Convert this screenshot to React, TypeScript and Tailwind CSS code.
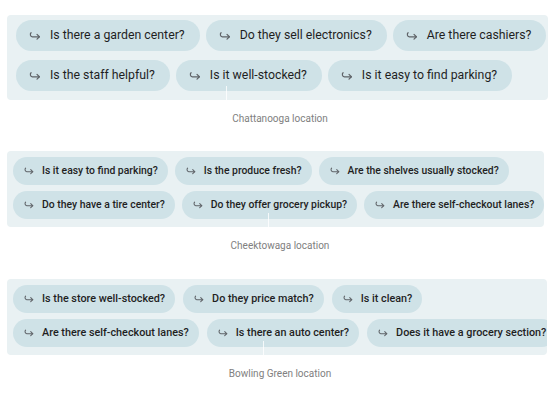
import type { ReactNode } from 'react';

type Section = {
  location: string;
  rows: string[][];
  big?: boolean;
  text: string;
  width: string;
  seam: string;
};

const sections: Section[] = [
  {
    location: 'Chattanooga location',
    big: true,
    text: 'text-[12.3px]',
    width: 'w-[541px]',
    seam: 'left-[219px]',
    rows: [
      ['Is there a garden center?', 'Do they sell electronics?', 'Are there cashiers?'],
      ['Is the staff helpful?', 'Is it well-stocked?', 'Is it easy to find parking?'],
    ],
  },
  {
    location: 'Cheektowaga location',
    text: 'text-[10.4px]',
    width: 'w-[537px]',
    seam: 'left-[261px]',
    rows: [
      ['Is it easy to find parking?', 'Is the produce fresh?', 'Are the shelves usually stocked?'],
      ['Do they have a tire center?', 'Do they offer grocery pickup?', 'Are there self-checkout lanes?'],
    ],
  },
  {
    location: 'Bowling Green location',
    text: 'text-[10.8px]',
    width: 'w-[540px]',
    seam: 'left-[256px]',
    rows: [
      ['Is the store well-stocked?', 'Do they price match?', 'Is it clean?'],
      ['Are there self-checkout lanes?', 'Is there an auto center?', 'Does it have a grocery section?'],
    ],
  },
];

function HookArrow({ size }: { size: number }) {
  return (
    <svg width={size} height={size} viewBox="0 0 16 16" fill="none" className="shrink-0 text-[#5f6368]">
      <path
        d="M3.5 4.2 C2.2 5.4 2.4 8.6 5 8.9 H13"
        stroke="currentColor"
        strokeWidth="1.4"
        strokeLinecap="round"
        strokeLinejoin="round"
      />
      <path d="M10.3 6.2 L13 8.9 L10.3 11.6" stroke="currentColor" strokeWidth="1.4" strokeLinecap="round" strokeLinejoin="round" />
    </svg>
  );
}

function Chip({ big, text, children }: { big?: boolean; text: string; children: ReactNode }) {
  return big ? (
    <div className={`flex h-[31px] shrink-0 items-center gap-[8px] rounded-full bg-[#cfe2e7] pl-[12px] pr-[15px] ${text} text-[#1f1f1f]`}>
      <HookArrow size={14} />
      <span className="whitespace-nowrap">{children}</span>
    </div>
  ) : (
    <div className={`flex h-[28px] shrink-0 items-center gap-[7px] rounded-full bg-[#cfe2e7] pl-[10px] pr-[10px] ${text} font-medium text-[#1f1f1f]`}>
      <HookArrow size={12} />
      <span className="whitespace-nowrap">{children}</span>
    </div>
  );
}

export default function App() {
  return (
    <div className="h-[401px] w-[560px] bg-white font-['Roboto',sans-serif]">
      {sections.map((s, i) => (
        <div key={s.location} className={i === 0 ? 'pt-[15px]' : i === 1 ? 'pt-[25px]' : 'pt-[26px]'}>
          <div
            className={`relative ml-[7px] ${s.width} overflow-hidden rounded-[4px] bg-[#e9f1f3] ${
              s.big ? 'px-[9px] pb-[9px] pt-[5px]' : 'px-[6px] pb-[8px] pt-[6px]'
            }`}
          >
            <div className={`flex flex-col ${s.big ? 'gap-[9px]' : 'gap-[6px]'}`}>
              {s.rows.map((row, r) => (
                <div key={r} className={`flex ${s.big ? 'gap-[6px]' : i === 2 ? 'gap-[8px]' : 'gap-[7px]'}`}>
                  {row.map((q) => (
                    <Chip key={q} big={s.big} text={s.text}>
                      {q}
                    </Chip>
                  ))}
                </div>
              ))}
            </div>
            <div className={`absolute bottom-0 ${s.seam} h-[14px] w-px bg-white/80`} />
          </div>
          <p className="mt-[11px] text-center text-[10px] text-[#808080]">{s.location}</p>
        </div>
      ))}
    </div>
  );
}
